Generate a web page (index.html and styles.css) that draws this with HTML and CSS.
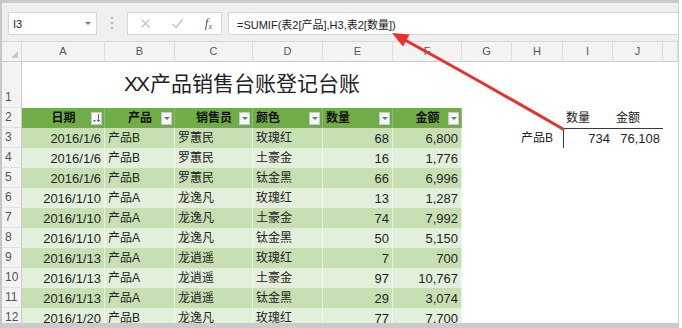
FILE: index.html
```html
<!DOCTYPE html>
<html lang="zh-CN">
<head>
  <meta charset="UTF-8" />
  <meta name="viewport" content="width=device-width, initial-scale=1.0"/>
  <title>XX产品销售台账</title>
  <link rel="stylesheet" href="styles.css">
</head>
<body>

  <div class="window">
    <!-- Formula bar -->
    <div class="formula-bar">
      <div class="name-box">
        <span>I3</span>
        <span class="caret"></span>
      </div>
      <div class="grip"><i></i><i></i><i></i></div>
      <div class="fx-buttons">
        <svg class="off" width="11" height="11" viewBox="0 0 11 11"><path d="M1.5 1.5 L9.5 9.5 M9.5 1.5 L1.5 9.5" /></svg>
        <svg class="off" width="13" height="11" viewBox="0 0 13 11"><path d="M1.5 6 L5 9.5 L11.5 1.5" /></svg>
        <span class="fx">f<sub>x</sub></span>
      </div>
      <div class="formula-input">=SUMIF(表2[产品],H3,表2[数量])</div>
    </div>

    <!-- Sheet -->
    <table class="sheet">
      <colgroup>
        <col class="c-rh"><col class="c-a"><col class="c-b"><col class="c-c"><col class="c-d">
        <col class="c-e"><col class="c-f"><col class="c-g"><col class="c-h"><col class="c-i">
        <col class="c-j"><col class="c-k">
      </colgroup>
      <thead>
        <tr class="col-head">
          <th class="corner"><span class="tri"></span></th>
          <th>A</th><th>B</th><th>C</th><th>D</th><th>E</th><th>F</th>
          <th>G</th><th>H</th><th>I</th><th>J</th><th></th>
        </tr>
      </thead>
      <tbody>
        <tr class="title-row">
          <th class="rh">1</th>
          <td colspan="6" class="title"><span class="xx">XX</span>产品销售台账登记台账</td>
          <td></td><td></td><td></td><td></td><td></td>
        </tr>
        <tr class="head-row">
          <th class="rh">2</th>
          <td class="th"><div class="hcell mid"><span class="lbl">日期</span><span class="filter sort"><svg width="9" height="10" viewBox="0 0 9 10"><path class="s" d="M6.5 1 V8.5 M4.8 6.8 L6.5 8.6 L8.2 6.8" /><path class="t" d="M1 7 H4 L2.5 9 Z" /></svg></span></div></td>
          <td class="th"><div class="hcell mid"><span class="lbl">产品</span><span class="filter"></span></div></td>
          <td class="th"><div class="hcell mid"><span class="lbl">销售员</span><span class="filter"></span></div></td>
          <td class="th"><div class="hcell"><span class="lbl">颜色</span><span class="filter"></span></div></td>
          <td class="th"><div class="hcell"><span class="lbl">数量</span><span class="filter"></span></div></td>
          <td class="th"><div class="hcell mid"><span class="lbl">金额</span><span class="filter"></span></div></td>
          <td></td><td></td>
          <td class="cn">数量</td>
          <td class="cn">金额</td>
          <td></td>
        </tr>
      </tbody>
      <tbody class="data">
        <tr>
          <th class="rh">3</th>
          <td class="t r">2016/1/6</td><td class="t cn">产品B</td><td class="t cn">罗蕙民</td><td class="t cn">玫瑰红</td><td class="t r">68</td><td class="t r">6,800</td>
          <td></td><td class="cn r hp">产品B</td><td class="r sel sel-l">734</td><td class="r sel">76,108</td><td></td>
        </tr>
        <tr>
          <th class="rh">4</th>
          <td class="t r">2016/1/6</td><td class="t cn">产品B</td><td class="t cn">罗蕙民</td><td class="t cn">土豪金</td><td class="t r">16</td><td class="t r">1,776</td>
          <td></td><td></td><td></td><td></td><td></td>
        </tr>
        <tr>
          <th class="rh">5</th>
          <td class="t r">2016/1/6</td><td class="t cn">产品B</td><td class="t cn">罗蕙民</td><td class="t cn">钛金黑</td><td class="t r">66</td><td class="t r">6,996</td>
          <td></td><td></td><td></td><td></td><td></td>
        </tr>
        <tr>
          <th class="rh">6</th>
          <td class="t r">2016/1/10</td><td class="t cn">产品A</td><td class="t cn">龙逸凡</td><td class="t cn">玫瑰红</td><td class="t r">13</td><td class="t r">1,287</td>
          <td></td><td></td><td></td><td></td><td></td>
        </tr>
        <tr>
          <th class="rh">7</th>
          <td class="t r">2016/1/10</td><td class="t cn">产品A</td><td class="t cn">龙逸凡</td><td class="t cn">土豪金</td><td class="t r">74</td><td class="t r">7,992</td>
          <td></td><td></td><td></td><td></td><td></td>
        </tr>
        <tr>
          <th class="rh">8</th>
          <td class="t r">2016/1/10</td><td class="t cn">产品A</td><td class="t cn">龙逸凡</td><td class="t cn">钛金黑</td><td class="t r">50</td><td class="t r">5,150</td>
          <td></td><td></td><td></td><td></td><td></td>
        </tr>
        <tr>
          <th class="rh">9</th>
          <td class="t r">2016/1/13</td><td class="t cn">产品A</td><td class="t cn">龙逍遥</td><td class="t cn">玫瑰红</td><td class="t r">7</td><td class="t r">700</td>
          <td></td><td></td><td></td><td></td><td></td>
        </tr>
        <tr>
          <th class="rh">10</th>
          <td class="t r">2016/1/13</td><td class="t cn">产品A</td><td class="t cn">龙逍遥</td><td class="t cn">土豪金</td><td class="t r">97</td><td class="t r">10,767</td>
          <td></td><td></td><td></td><td></td><td></td>
        </tr>
        <tr>
          <th class="rh">11</th>
          <td class="t r">2016/1/13</td><td class="t cn">产品A</td><td class="t cn">龙逍遥</td><td class="t cn">钛金黑</td><td class="t r">29</td><td class="t r">3,074</td>
          <td></td><td></td><td></td><td></td><td></td>
        </tr>
        <tr>
          <th class="rh">12</th>
          <td class="t r">2016/1/20</td><td class="t cn">产品B</td><td class="t cn">龙逸凡</td><td class="t cn">玫瑰红</td><td class="t r">77</td><td class="t r">7,700</td>
          <td></td><td></td><td></td><td></td><td></td>
        </tr>
      </tbody>
    </table>
  </div>

  <!-- Red callout arrow from I3 to the formula -->
  <svg class="callout" width="682" height="328" viewBox="0 0 682 328">
    <path class="line" d="M563 129 Q478 80 405 40" />
    <polygon class="head" points="392,33 409.5,34.5 403,46.5" />
  </svg>

</body>
</html>
```

FILE: styles.css
```css
body {
  margin: 0;
  position: relative;
  background: #fff;
  font-family: "Liberation Sans", "Noto Sans CJK SC", sans-serif;
  color: #1f1f1f;
}

.window {
  width: 679px;
  height: 328px;
  box-sizing: border-box;
  overflow: hidden;
  border-top: 3px solid #c9c9c9;
  border-left: 2px solid #c6c6c6;
  border-right: 1px solid #cfcfcf;
  border-bottom: 5px solid #cbcbcb;
  background: #fff;
}

/* ---------- formula bar ---------- */
.formula-bar {
  height: 39px;
  box-sizing: border-box;
  display: flex;
  align-items: flex-start;
  padding: 9px 0 0 6px;
  background: #efefef;
  border-bottom: 1px solid #d6d6d6;
}

.name-box,
.fx-buttons,
.formula-input {
  height: 23px;
  box-sizing: border-box;
  background: #fff;
  border: 1px solid #d6d6d6;
  display: flex;
  align-items: center;
}

.name-box {
  width: 89px;
  padding: 0 4px;
  justify-content: space-between;
  font-size: 11px;
  color: #222;
}

.caret {
  width: 0;
  height: 0;
  border-left: 3px solid transparent;
  border-right: 3px solid transparent;
  border-top: 3px solid #777;
  margin-right: 1px;
}

.grip {
  width: 30px;
  display: flex;
  flex-direction: column;
  align-items: center;
  gap: 3px;
  padding-top: 5px;
}

.grip i {
  display: block;
  width: 2px;
  height: 2px;
  background: #b5b5b5;
}

.fx-buttons {
  width: 95px;
  padding: 0 9px 0 12px;
  justify-content: space-between;
}

.fx-buttons svg.off path {
  fill: none;
  stroke: #c4c4c4;
  stroke-width: 1.4;
}

.fx {
  font-family: "Liberation Serif", serif;
  font-style: italic;
  font-size: 13px;
  color: #555;
  margin-top: -2px;
}

.fx sub {
  font-size: 8px;
  vertical-align: -2px;
}

.formula-input {
  flex: 1;
  margin-left: 6px;
  border-right: none;
  padding-left: 8px;
  font-size: 11px;
  color: #222;
  white-space: nowrap;
}

/* ---------- sheet grid ---------- */
.sheet {
  border-collapse: separate;
  border-spacing: 0;
  table-layout: fixed;
  width: 676px;
}

.c-rh { width: 20px; }
.c-a { width: 83px; }
.c-b { width: 70px; }
.c-c { width: 78px; }
.c-d { width: 70px; }
.c-e { width: 70px; }
.c-f { width: 69px; }
.c-g { width: 50px; }
.c-h { width: 51px; }
.c-i { width: 50px; }
.c-j { width: 50px; }
.c-k { width: 15px; }

.sheet tr { height: 20px; }

.sheet td,
.sheet th {
  box-sizing: border-box;
  padding: 0 3px;
  white-space: nowrap;
  overflow: hidden;
  font-size: 13px;
  line-height: 19px;
}

.col-head th {
  background: #f3f3f3;
  border-right: 1px solid #dcdcdc;
  border-bottom: 1px solid #cdcdcd;
  font-weight: normal;
  font-size: 11px;
  color: #555;
  text-align: center;
}

.corner {
  position: relative;
}

.corner .tri {
  position: absolute;
  right: 3px;
  bottom: 3px;
  width: 0;
  height: 0;
  border-left: 7px solid transparent;
  border-bottom: 7px solid #c8c8c8;
}

.rh {
  background: #f3f3f3;
  border-right: 1px solid #cdcdcd;
  border-bottom: 1px solid #e0e0e0;
  font-weight: normal;
  font-size: 12px !important;
  color: #555;
  text-align: left;
  vertical-align: bottom;
  padding-left: 3px !important;
}

.sheet .title-row { height: 46px; }

.title {
  vertical-align: top;
  text-align: center;
  padding-top: 10px !important;
  font-size: 21px !important;
  line-height: 24px !important;
  color: #222;
}

.title .xx {
  letter-spacing: -2px;
  margin-right: 2px;
}

/* ---------- green table ---------- */
.th {
  background: #70ad47;
  border-right: 1px solid #8fc06c;
  padding: 0 2px 0 3px !important;
}

.hcell {
  display: flex;
  align-items: center;
  font-size: 12px;
  font-weight: bold;
  color: #111;
}

.hcell .lbl {
  flex: 1;
}

.hcell.mid .lbl {
  text-align: center;
  padding-left: 11px;
}

.filter {
  width: 11px;
  height: 13px;
  box-sizing: border-box;
  background: #f6f6f6;
  border: 1px solid #c9c9c9;
  display: flex;
  align-items: center;
  justify-content: center;
}

.filter::after {
  content: "";
  width: 0;
  height: 0;
  border-left: 3px solid transparent;
  border-right: 3px solid transparent;
  border-top: 3px solid #777;
}

.filter.sort::after {
  display: none;
}

.filter.sort .s {
  fill: none;
  stroke: #666;
  stroke-width: 1;
}

.filter.sort .t {
  fill: #666;
}

.data tr:nth-child(odd) .t { background: #c6e0b4; }
.data tr:nth-child(even) .t { background: #e2efda; }

.t {
  border-right: 1px solid rgba(255, 255, 255, 0.55);
}

.r { text-align: right; }

.cn {
  font-size: 12px !important;
  color: #222;
}

.hp { padding-right: 10px !important; }

.sel {
  border-top: 1px solid #3a3a3a;
  font-size: 13px;
}

.sel-l {
  border-left: 1px solid #3a3a3a;
}

/* ---------- callout ---------- */
.callout {
  position: absolute;
  left: 0;
  top: 0;
  pointer-events: none;
}

.callout .line {
  fill: none;
  stroke: #e5322b;
  stroke-width: 3;
  stroke-linecap: round;
}

.callout .head {
  fill: #e5322b;
}
```
